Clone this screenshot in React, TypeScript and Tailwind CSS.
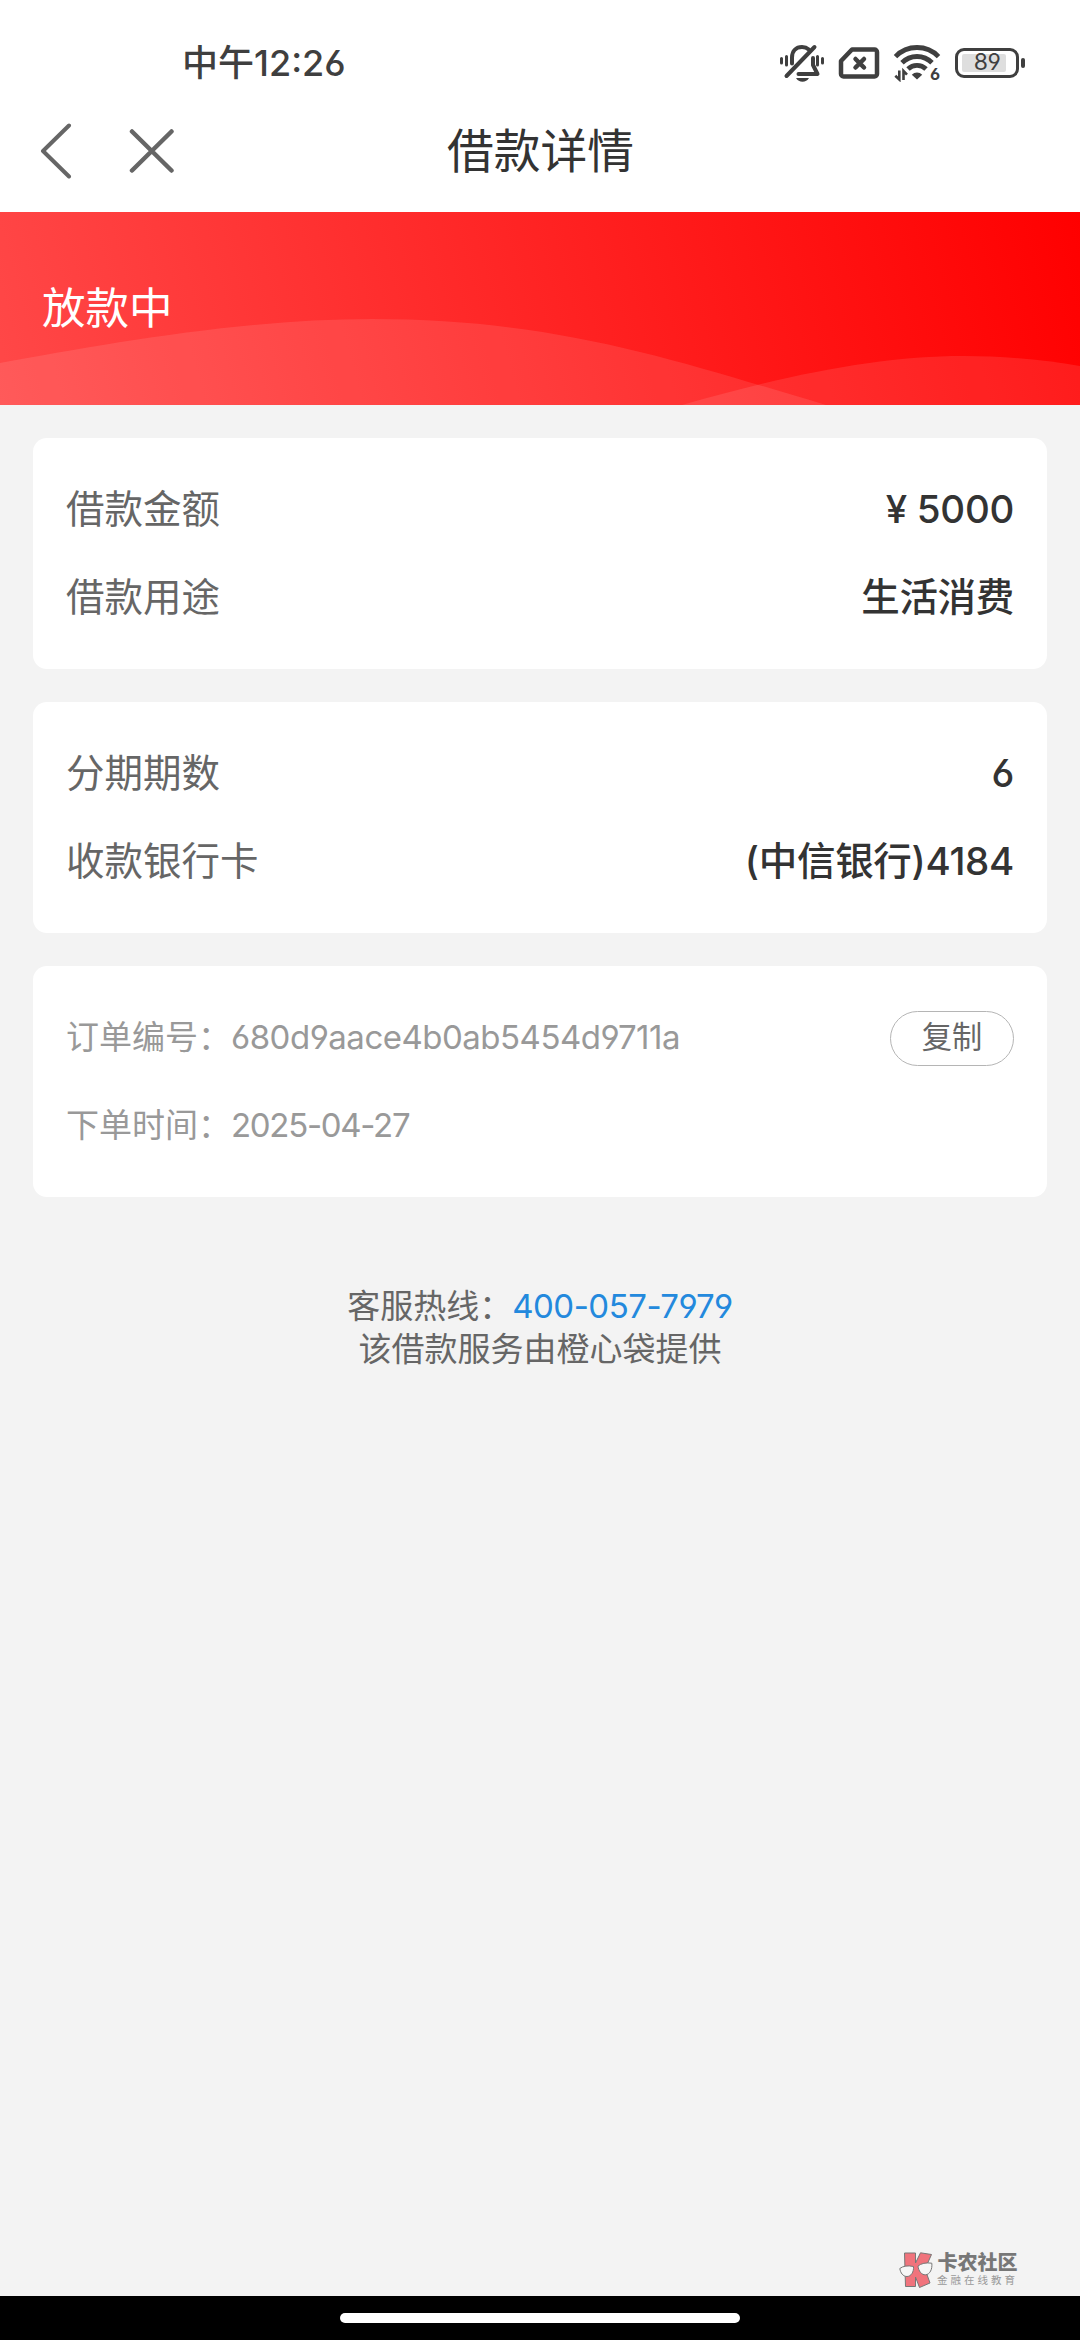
import type { ReactNode } from "react";

function MutedBellIcon() {
  return (
    <svg viewBox="0 0 46 40" className="w-[46px] h-[40px]" fill="none" stroke="#3f3f3f" strokeLinecap="round">
      <path d="M2.5 15.5v4.500M7.500 13.500v8.500M38.500 13.500v8.500M43.500 15.500v4.500" strokeWidth="3" />
      <path d="M13 20.500V14.500C13 8 17 4 23 4c2.800 0 5 .8 6.800 2.400" strokeWidth="4" />
      <path d="M34 15v7l4.500 9H19.500" strokeWidth="4" strokeLinejoin="round" />
      <path d="M7.500 33L35.500 4" strokeWidth="4" />
      <path d="M17 35h13c-1.500 2.600-3.800 3.800-6.500 3.800s-5-1.200-6.500-3.800z" fill="#3f3f3f" stroke="none" />
    </svg>
  );
}

function NoSimIcon() {
  return (
    <svg viewBox="0 0 42 32" className="w-[42px] h-[32px]" fill="none" stroke="#3f3f3f">
      <path d="M14 2.500H36.500a2.500 2.500 0 0 1 2.500 2.500V27a2.500 2.500 0 0 1-2.500 2.500H5.500A2.500 2.500 0 0 1 3 27V14z" strokeWidth="4.500" strokeLinejoin="round" />
      <path d="M17.500 12l8.500 8.500M26 12l-8.500 8.500" strokeWidth="4.500" strokeLinecap="round" />
    </svg>
  );
}

function WifiIcon() {
  return (
    <div className="relative h-[38px] w-[48px]">
      <svg viewBox="0 0 48 38" className="h-full w-full" fill="none" stroke="#3f3f3f">
        <path d="M2.500 12.600a30 30 0 0 1 43 0" strokeWidth="4.800" />
        <path d="M9 18.800a21 21 0 0 1 30 0" strokeWidth="4.800" />
        <path d="M15 25a12.800 12.800 0 0 1 18 0" strokeWidth="4.800" />
        <path d="M24 35.500l-5.200-4.700a7.300 7.300 0 0 1 10.400 0z" fill="#3f3f3f" stroke="none" />
        <path d="M6.300 26.500v9L2.300 31.800M10.500 36v-9l3.500 3.700" strokeWidth="2.600" />
      </svg>
      <span className="absolute left-[37px] top-[20px] text-[16.500px] font-bold leading-[20px] text-[#3f3f3f]">6</span>
    </div>
  );
}

function Battery({ level }: { level: number }) {
  return (
    <div className="flex items-center gap-[2px]">
      <div className="relative flex h-[30px] w-[64px] items-center justify-center rounded-[9px] border-[3.5px] border-[#3f3f3f]">
        <div className="absolute left-[4px] top-[3px] h-[18px] w-[44px] rounded-[2px] bg-[#dedede]" />
        <span className="relative text-[23px] leading-none tracking-[-0.5px] text-[#3f3f3f]">{level}</span>
      </div>
      <div className="h-[10px] w-[4px] rounded-full bg-[#3f3f3f]" />
    </div>
  );
}

function StatusBar() {
  return (
    <div className="flex h-[106px] items-center justify-between pl-[182px] pr-[55px] pt-[19px]">
      <div className="text-[36px] font-medium leading-[44px] text-[#3f3f3f]">中午12:26</div>
      <div className="flex items-center gap-[14px]">
        <div className="flex items-center gap-[13px]">
          <MutedBellIcon />
          <NoSimIcon />
          <WifiIcon />
        </div>
        <Battery level={89} />
      </div>
    </div>
  );
}

function Header() {
  return (
    <header className="relative flex h-[106px] items-center gap-[57px] pl-[40px] pb-[17px]">
      <svg viewBox="0 0 32 56" className="h-[56px] w-[32px]" fill="none" stroke="#666" strokeWidth="4" strokeLinecap="round" strokeLinejoin="round">
        <path d="M29 2.500L3 28L29 53.500" />
      </svg>
      <svg viewBox="0 0 46 46" className="h-[46px] w-[46px]" fill="none" stroke="#666" strokeWidth="4.500" strokeLinecap="round">
        <path d="M3 3.500L42.500 42.500M42.500 3.500L3 42.500" />
      </svg>
      <h1 className="absolute inset-x-0 top-[15px] pl-[1px] text-center text-[46.750px] leading-[60px] text-[#333]">借款详情</h1>
    </header>
  );
}

function Banner() {
  return (
    <div className="relative h-[193px] bg-[linear-gradient(75deg,#ff4848_0%,#ff0000_100%)]">
      <svg viewBox="0 0 1080 193" className="absolute inset-0 h-full w-full" fill="#fff" fillOpacity="0.1">
        <path d="M0 151C100 133 240 107 372 107C560 107 680 150 826 193H0z" />
        <path d="M682 193C790 162 880 144 964 144C1005 144 1045 148 1080 154V193z" />
      </svg>
      <div className="relative pl-[42px] pt-[66px] text-[43.500px] leading-[60px] text-white">放款中</div>
    </div>
  );
}

function Card({ children }: { children: ReactNode }) {
  return <section className="h-[231px] rounded-[14px] bg-white px-[33px] pt-[28px]">{children}</section>;
}

function Row({ label, value }: { label: string; value: string }) {
  return (
    <div className="flex h-[88px] items-center justify-between text-[38.500px]">
      <span className="text-[#666]">{label}</span>
      <span className="font-medium tracking-[-0.3px] text-[#333]">{value}</span>
    </div>
  );
}

function Watermark() {
  return (
    <div className="absolute bottom-[8px] right-[62px] flex gap-[4px]">
      <svg viewBox="0 0 34 36" className="h-[36px] w-[34px]" stroke="#777" strokeWidth="1" strokeLinejoin="round">
        <path d="M5.500 1H16.500V11L21.500 .8L32.500 2.500L26 17L31 31L20.500 35.500L16.500 25V34.500H6.500z" fill="#f0737c" />
        <path d="M.8 16.500C4 14 9 13.200 14.500 14.500C15 20 12 24.500 8 24.500C4 24.500 1.500 21 .8 16.500z" fill="#f6f6f6" />
        <path d="M19 14C22 11.500 27 10.300 32.800 11.200C33.500 17 31 22.500 26.500 22.800C22.500 23 19.500 19 19 14z" fill="#f6f6f6" />
      </svg>
      <div className="flex flex-col whitespace-nowrap text-center">
        <span className="text-[20px] font-black leading-[22px] text-[#777]">卡农社区</span>
        <span className="text-[10.500px] leading-[13px] tracking-[3px] text-[#999]">金融在线教育</span>
      </div>
    </div>
  );
}

export default function App() {
  return (
    <div className="flex h-[2340px] w-[1080px] flex-col overflow-hidden bg-[#f3f3f3] font-['Inter','Noto_Sans_CJK_SC',sans-serif] [font-feature-settings:'cv03','cv04']">
      <div className="bg-white">
        <StatusBar />
        <Header />
      </div>
      <Banner />
      <main className="relative flex flex-1 flex-col gap-[33px] px-[33px] pt-[33px]">
        <Card>
          <Row label="借款金额" value="¥ 5000" />
          <Row label="借款用途" value="生活消费" />
        </Card>
        <Card>
          <Row label="分期期数" value="6" />
          <Row label="收款银行卡" value="(中信银行)4184" />
        </Card>
        <Card>
          <div className="flex h-[88px] items-center text-[33px] text-[#999]">
            <span className="w-[165px]">订单编号：</span>
            <span className="tracking-[-0.5px]">680d9aace4b0ab5454d9711a</span>
            <button className="ml-auto h-[55px] w-[124px] rounded-full border border-[#b5b5b5] pb-[2px] text-[30.250px] leading-none text-[#666]">
              复制
            </button>
          </div>
          <div className="flex h-[88px] items-center text-[33px] text-[#999]">
            <span className="w-[165px]">下单时间：</span>
            <span className="tracking-[-1.3px]">2025-04-27</span>
          </div>
        </Card>
        <footer className="pt-[55px] text-center text-[33px] leading-[43px] text-[#666]">
          <p>
            客服热线：<a className="tracking-[-0.5px] text-[#2389dd]">400-057-7979</a>
          </p>
          <p>该借款服务由橙心袋提供</p>
        </footer>
        <Watermark />
      </main>
      <div className="flex h-[44px] justify-center bg-black pt-[17px]">
        <div className="h-[10px] w-[400px] rounded-full bg-white" />
      </div>
    </div>
  );
}
